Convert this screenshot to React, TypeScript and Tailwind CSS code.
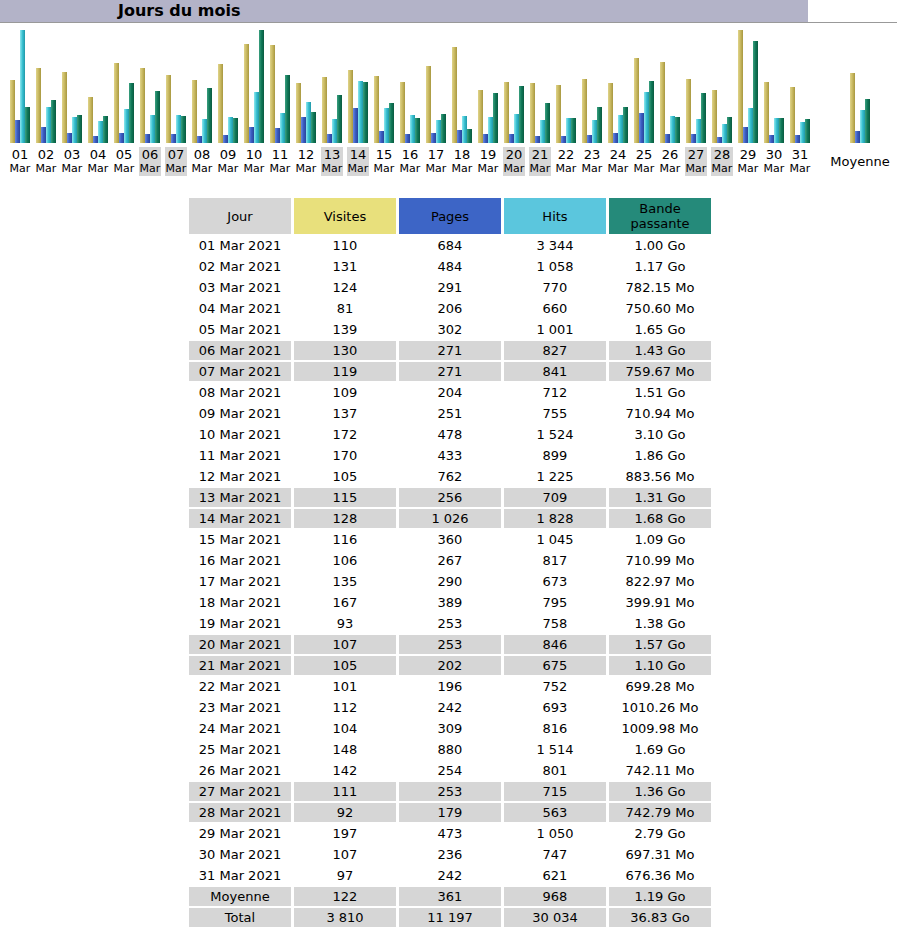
import React from "react";

const raw: [number, number, number, number, string, number][] = [
  [1,110,684,3344,"1.00 Go",1024],[2,131,484,1058,"1.17 Go",1198],[3,124,291,770,"782.15 Mo",782.15],[4,81,206,660,"750.60 Mo",750.6],[5,139,302,1001,"1.65 Go",1690],
  [6,130,271,827,"1.43 Go",1464],[7,119,271,841,"759.67 Mo",759.67],[8,109,204,712,"1.51 Go",1546],[9,137,251,755,"710.94 Mo",710.94],[10,172,478,1524,"3.10 Go",3174],
  [11,170,433,899,"1.86 Go",1905],[12,105,762,1225,"883.56 Mo",883.56],[13,115,256,709,"1.31 Go",1341],[14,128,1026,1828,"1.68 Go",1720],[15,116,360,1045,"1.09 Go",1116],
  [16,106,267,817,"710.99 Mo",710.99],[17,135,290,673,"822.97 Mo",822.97],[18,167,389,795,"399.91 Mo",399.91],[19,93,253,758,"1.38 Go",1413],[20,107,253,846,"1.57 Go",1608],
  [21,105,202,675,"1.10 Go",1126],[22,101,196,752,"699.28 Mo",699.28],[23,112,242,693,"1010.26 Mo",1010.26],[24,104,309,816,"1009.98 Mo",1009.98],[25,148,880,1514,"1.69 Go",1731],
  [26,142,254,801,"742.11 Mo",742.11],[27,111,253,715,"1.36 Go",1393],[28,92,179,563,"742.79 Mo",742.79],[29,197,473,1050,"2.79 Go",2857],[30,107,236,747,"697.31 Mo",697.31],
  [31,97,242,621,"676.36 Mo",676.36],
];
const weekend = new Set([6,7,13,14,20,21,27,28]);
const fmt = (n: number) => n.toString().replace(/\B(?=(\d{3})+(?!\d))/g, " ");
const H = 113;
const maxV = 197, maxH = 3344, maxB = 3174;
const pad = (d: number) => (d < 10 ? "0" + d : "" + d);

function Bars({ v, p, h, b }: { v: number; p: number; h: number; b: number }) {
  const bar = (val: number, max: number, cls: string) => (
    <div className={"w-[5px] " + cls} style={{ height: Math.max(1, Math.round((val / max) * H)) }} />
  );
  return (
    <div className="flex items-end h-[118px] justify-center">
      {bar(v, maxV, "bg-gradient-to-r from-[#e0d48a] via-[#c8b860] to-[#a89840]")}
      {bar(p, maxH, "bg-gradient-to-r from-[#6a8ae0] via-[#3a5cc0] to-[#2a449a]")}
      {bar(h, maxH, "bg-gradient-to-r from-[#8ae8f0] via-[#38c0d0] to-[#2098a8]")}
      {bar(b, maxB, "bg-gradient-to-r from-[#3aa080] via-[#107858] to-[#0a5a40]")}
    </div>
  );
}

export default function App() {
  const font = { fontFamily: "'DejaVu Sans', Verdana, sans-serif" };
  return (
    <div className="bg-white w-[897px] h-[941px] text-black" style={font}>
      <div className="flex border-b border-[#999]">
        <div className="w-[808px] h-[22px] bg-[#b3b3c8] font-bold text-[16px] leading-[22px] pl-[118px]">Jours du mois</div>
      </div>
      <div className="flex pl-[7px] pt-[2px]">
        {raw.map(([d, v, p, h, , bm]) => (
          <div key={d} className="w-[26px] flex flex-col items-center">
            <Bars v={v} p={p} h={h} b={bm} />
            <div className={"w-[22px] mt-[4px] text-center " + (weekend.has(d) ? "bg-[#d6d6d6]" : "")}>
              <div className="text-[13px] leading-[15px]">{pad(d)}</div>
              <div className="text-[11px] leading-[14px]">Mar</div>
            </div>
          </div>
        ))}
        <div className="w-[70px] ml-[12px] flex flex-col items-center">
          <Bars v={122} p={361} h={968} b={1248} />
          <div className="mt-[9px] text-[13px]">Moyenne</div>
        </div>
      </div>
      <div className="flex justify-center mt-[20px] pl-[3px]">
        <table className="border-separate border-spacing-x-[3px] border-spacing-y-[2px] text-[13px] text-center">
          <thead>
            <tr className="h-[36px] leading-[15px]">
              <th className="font-normal w-[102px] bg-[#d6d6d6]">Jour</th>
              <th className="font-normal w-[102px] bg-[#e8e07c]">Visites</th>
              <th className="font-normal w-[102px] bg-[#3d65c6]">Pages</th>
              <th className="font-normal w-[102px] bg-[#5bc6dd]">Hits</th>
              <th className="font-normal w-[102px] bg-[#258a7a]">Bande<br />passante</th>
            </tr>
          </thead>
          <tbody>
            {raw.map(([d, v, p, h, b]) => {
              const bg = weekend.has(d) ? "bg-[#d6d6d6]" : "";
              return (
                <tr key={d} className="h-[19px] leading-[19px]">
                  <td className={bg}>{pad(d)} Mar 2021</td>
                  <td className={bg}>{v}</td>
                  <td className={bg}>{fmt(p)}</td>
                  <td className={bg}>{fmt(h)}</td>
                  <td className={bg}>{b}</td>
                </tr>
              );
            })}
            {[["Moyenne","122","361","968","1.19 Go"],["Total","3 810","11 197","30 034","36.83 Go"]].map((r) => (
              <tr key={r[0]} className="h-[19px] leading-[19px]">
                {r.map((c, i) => <td key={i} className="bg-[#d6d6d6]">{c}</td>)}
              </tr>
            ))}
          </tbody>
        </table>
      </div>
    </div>
  );
}
